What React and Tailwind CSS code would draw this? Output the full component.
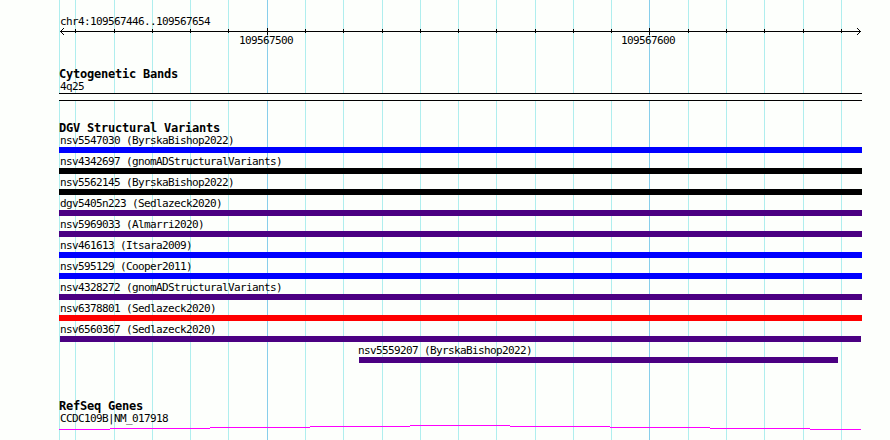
const minorLines = [59, 75, 114, 152, 190, 228, 305, 343, 382, 420, 458, 496, 535, 573, 611, 688, 726, 764, 803, 841];
const majorLines = [267, 649];

const variants = [
  { name: 'nsv5547030 (ByrskaBishop2022)', color: 'bg-[#0000ff]' },
  { name: 'nsv4342697 (gnomADStructuralVariants)', color: 'bg-black' },
  { name: 'nsv5562145 (ByrskaBishop2022)', color: 'bg-black' },
  { name: 'dgv5405n223 (Sedlazeck2020)', color: 'bg-[#4b0082]' },
  { name: 'nsv5969033 (Almarri2020)', color: 'bg-[#4b0082]' },
  { name: 'nsv461613 (Itsara2009)', color: 'bg-[#0000ff]' },
  { name: 'nsv595129 (Cooper2011)', color: 'bg-[#0000ff]' },
  { name: 'nsv4328272 (gnomADStructuralVariants)', color: 'bg-[#4b0082]' },
  { name: 'nsv6378801 (Sedlazeck2020)', color: 'bg-[#ff0000]' },
  { name: 'nsv6560367 (Sedlazeck2020)', color: 'bg-[#4b0082]', bar: 'mx-px' },
  { name: 'nsv5559207 (ByrskaBishop2022)', color: 'bg-[#4b0082]', bar: 'ml-[300px] mr-[24px]', label: 'pl-[299px]' },
];

// Each step is [start, end, y] of one flat piece of the intron line.
const geneSteps = [
  [0, 51, 4], [51, 151, 3], [151, 251, 2], [251, 351, 1], [351, 451, 0],
  [451, 551, 1], [551, 651, 2], [651, 751, 3], [751, 802, 4],
];

function Label({ children, className = 'pl-px' }) {
  return (
    <div className={`h-3 whitespace-pre text-[11px] leading-[14px] tracking-[-0.622px] ${className}`}>{children}</div>
  );
}

function Title({ children }) {
  return <h2 className="h-3 whitespace-pre text-[12px] font-bold leading-[13px] tracking-[-0.224px]">{children}</h2>;
}

function GridLines() {
  return (
    <svg className="absolute inset-0" width="890" height="440" shapeRendering="crispEdges" aria-hidden="true">
      {minorLines.map((x) => <rect key={x} x={x} y="0" width="1" height="440" fill="#afeeee" />)}
      {majorLines.map((x) => <rect key={x} x={x} y="0" width="1" height="440" fill="#87ceeb" />)}
    </svg>
  );
}

function Ruler() {
  return (
    <svg className="-mb-px block" width="803" height="8" shapeRendering="crispEdges">
      <rect x="1" y="4" width="801" height="1" />
      {minorLines.slice(1).map((x) => <rect key={x} x={x - 59} y="2" width="1" height="4" />)}
      {majorLines.map((x) => <rect key={x} x={x - 59} y="1" width="1" height="7" />)}
      {[1, 2, 3].map((d) => (
        <g key={d}>
          <rect x={1 + d} y={4 - d} width="1" height="1" />
          <rect x={1 + d} y={4 + d} width="1" height="1" />
          <rect x={801 - d} y={4 - d} width="1" height="1" />
          <rect x={801 - d} y={4 + d} width="1" height="1" />
        </g>
      ))}
    </svg>
  );
}

export default function App() {
  return (
    <div className="relative h-[440px] w-[890px] overflow-hidden bg-[#fdfffc] font-['DejaVu_Sans_Mono',monospace] text-black">
      <GridLines />
      <main className="relative ml-[59px] w-[803px] pt-[15px]">
        <header>
          <Label>chr4:109567446..109567654</Label>
          <Ruler />
          <div className="flex">
            <Label className="w-[382px] pl-[180px]">109567500</Label>
            <Label className="pl-[180px]">109567600</Label>
          </div>
        </header>
        <section className="mt-[22px]">
          <Title>Cytogenetic Bands</Title>
          <Label>4q25</Label>
          <div className="mt-px h-2 border-y border-black bg-[#fdfffc]" />
        </section>
        <section className="mt-[21px]">
          <Title>DGV Structural Variants</Title>
          {variants.map((v) => (
            <div key={v.name} className="h-[21px]">
              <Label className={v.label}>{v.name}</Label>
              <div className={`mt-px h-1.5 ${v.color} ${v.bar || ''}`} />
            </div>
          ))}
        </section>
        <section className="mt-[35px]">
          <Title>RefSeq Genes</Title>
          <Label>CCDC109B|NM_017918</Label>
          <svg className="mt-px block" width="803" height="5" shapeRendering="crispEdges">
            {geneSteps.map(([a, b, y]) => <rect key={a} x={a} y={y} width={b - a} height="1" fill="#ff00ff" />)}
          </svg>
        </section>
      </main>
    </div>
  );
}
